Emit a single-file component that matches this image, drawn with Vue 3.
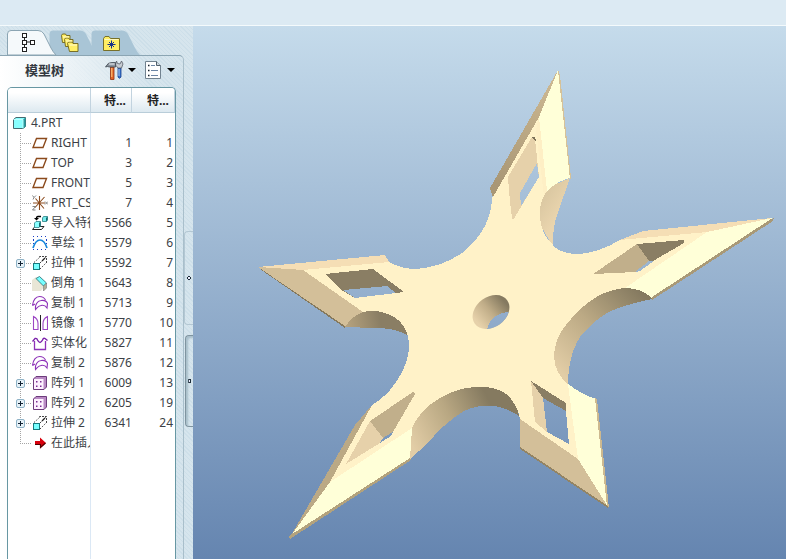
<script setup>
import { ref } from 'vue'

const activeTab = ref('tree')
const tabs = [
  { id: 'tree', label: '模型树' },
  { id: 'folders', label: '文件夹浏览器' },
  { id: 'favorites', label: '收藏夹' },
]

const rows = [
  { name: 'RIGHT', icon: 'plane', no: 1, id: 1 },
  { name: 'TOP', icon: 'plane', no: 3, id: 2 },
  { name: 'FRONT', icon: 'plane', no: 5, id: 3 },
  { name: 'PRT_CS', icon: 'csys', no: 7, id: 4 },
  { name: '导入特征', icon: 'import', no: 5566, id: 5 },
  { name: '草绘 1', icon: 'sketch', no: 5579, id: 6 },
  { name: '拉伸 1', icon: 'extrude', no: 5592, id: 7, open: false },
  { name: '倒角 1', icon: 'chamfer', no: 5643, id: 8 },
  { name: '复制 1', icon: 'copy', no: 5713, id: 9 },
  { name: '镜像 1', icon: 'mirror', no: 5770, id: 10 },
  { name: '实体化', icon: 'solid', no: 5827, id: 11 },
  { name: '复制 2', icon: 'copy', no: 5876, id: 12 },
  { name: '阵列 1', icon: 'pattern', no: 6009, id: 13, open: false },
  { name: '阵列 2', icon: 'pattern', no: 6205, id: 19, open: false },
  { name: '拉伸 2', icon: 'extrude', no: 6341, id: 24, open: false },
  { name: '在此插入', icon: 'insert', last: true },
]
</script>

<template>
  <div class="app">
    <svg class="defs" aria-hidden="true">
      <symbol id="i-part" viewBox="0 0 16 16">
        <path d="M1.5 4.5 4 2.500H13.500V11.500L11 13.500H1.500Z" fill="#8ff" stroke="#446a70" />
        <path d="M11 4.500 13.500 2.500V11.500L11 13.500Z" fill="#269a9e" />
        <path d="M1.500 4.500H11V13.500" fill="none" stroke="#bff" />
      </symbol>
      <symbol id="i-plane" viewBox="0 0 16 16">
        <path d="M4.500 3.500H14.500L11 12.500H1Z" fill="none" stroke="#8b4a1c" stroke-width="1.400" />
      </symbol>
      <symbol id="i-csys" viewBox="0 0 16 16">
        <path d="M7.500 1V15M1 8H13M3.500 3.500 12 13.500M12.500 2 3 12.500" stroke="#8b4a1c" stroke-width="1.100" fill="none" />
        <path d="M.5 .5 2 2.500 4 .5M2 2.500 1 4.500M13 6.500 16 9.500M16 6.500 13 9.500M.5 11.500H3.500L.5 15H3.500" stroke="#777" stroke-width=".9" fill="none" />
      </symbol>
      <symbol id="i-import" viewBox="0 0 16 16">
        <path d="M.5 14.500 3 11.500H12L9.500 14.500Z" fill="#fff" stroke="#222" />
        <path d="M2.500 8 4 6.500H8.500V11L7 12.500H2.500Z" fill="#8ff" stroke="#2a7f84" stroke-width=".8" />
        <path d="M7 12.500V8L8.500 6.500V11Z" fill="#146b70" />
        <path d="M10.500 3 11.500 1.500H15.500V5L14.500 6.500H10.500Z" fill="#7ee" stroke="#2a7f84" stroke-width=".8" />
        <path d="M14 6.500V3L15.500 1.500V5Z" fill="#146b70" />
        <path d="M9 1.500H6Q4.500 1.500 4.500 3.500" stroke="#000" stroke-width="1.300" fill="none" />
        <path d="M2 3H7L4.500 5.500Z" fill="#000" />
      </symbol>
      <symbol id="i-sketch" viewBox="0 0 16 16">
        <path d="M1 1.500H15M1 14.500H15M1.500 5V6M1.500 8V9M14.500 5V6M14.500 8V9" stroke="#1c3fc4" stroke-dasharray="1 3" fill="none" />
        <path d="M1.500 4V13M14.500 4V13" stroke="#1c3fc4" stroke-dasharray="1 3" fill="none" />
        <path d="M1 13C3 7 5 5 8 5S13 7 15 13" stroke="#1686dc" stroke-width="1.700" fill="none" />
      </symbol>
      <symbol id="i-extrude" viewBox="0 0 16 16">
        <path d="M2 7.500 7.500 2.500M8 14 14 8" stroke="#444" stroke-dasharray="1.500 1.500" fill="none" />
        <path d="M7.500 2V1.500H14.500V8M8 8 14 2" stroke="#444" stroke-dasharray="2 1" fill="none" />
        <path d="M10 6 13 3" stroke="#222" stroke-width="1.200" />
        <rect x="1.500" y="8.500" width="6" height="6" fill="#7ff" stroke="#16797e" />
      </symbol>
      <symbol id="i-chamfer" viewBox="0 0 16 16">
        <path d="M0 5 4 2 12 12 9 16H0Z" fill="#e8e6d6" />
        <path d="M4 3.500 7.500 1.500 14.500 8 11.500 11Z" fill="#7ff" stroke="#256a70" stroke-width=".8" />
        <path d="M11.500 11 14.500 8V13L11.500 16Z" fill="#b5b09a" stroke="#777" stroke-width=".6" />
      </symbol>
      <symbol id="i-copy" viewBox="0 0 16 16">
        <path d="M.5 10.500C1 5 4 1.500 7.500 1.500 11 1.500 12.500 3 13.500 5M.5 10.500 3 9" fill="none" stroke="#8d31b8" stroke-width="1.100" />
        <path d="M3.500 14.500C3 10 5 6 9 5.500 12 5 14.500 6 15.500 8.500L15 13C13 10 11 10 9 10.500 6 11 5 13 3.500 14.500Z" fill="#fff" stroke="#8d31b8" stroke-width="1.100" />
      </symbol>
      <symbol id="i-mirror" viewBox="0 0 16 16">
        <path d="M8.500 0V16" stroke="#222" />
        <path d="M1.500 1.500C4.500 3 6 6 6 8.500V14.500H1.500ZM15.500 1.500C12.500 3 11 6 11 8.500V14.500H15.500Z" fill="#fff" stroke="#9c45c4" stroke-width="1.100" />
      </symbol>
      <symbol id="i-solid" viewBox="0 0 16 16">
        <path d="M2.500 6V14.500H13.500V6" fill="#fff" stroke="#8d31b8" stroke-width="1.300" />
        <path d="M.5 6.500 3 3.500Q5 3 5.500 5 8 10 10.500 5 11.500 2.500 13 3.500L15.500 5.500" fill="none" stroke="#7a1faa" stroke-width="1.400" />
      </symbol>
      <symbol id="i-pattern" viewBox="0 0 16 16">
        <path d="M1.500 4 4 1.500H14.500V12L12 14.500H1.500Z" fill="#b98ac4" stroke="#6d3b7c" />
        <path d="M2 4H11.500V14H2Z" fill="#fdf0ff" />
        <path d="M4 6H5.500V7.500H4ZM8 6H9.500V7.500H8ZM4 10.500H5.500V12H4ZM8 10.500H9.500V12H8Z" fill="#7b2d92" />
      </symbol>
      <symbol id="i-insert" viewBox="0 0 16 16">
        <path d="M3 6H8V2.500L14 8 8 13.500V10H3Z" fill="#d8000c" />
        <path d="M3 9.500H8.500V12.500L13.500 8" fill="none" stroke="#520000" stroke-width="1.200" />
      </symbol>
      <symbol id="i-tree" viewBox="0 0 20 20">
        <path d="M6.500 5V15M6.500 10H13" stroke="#222" fill="none" />
        <g fill="#fff" stroke="#222"><rect x="4.500" y="1.500" width="4" height="4" /><rect x="4.500" y="8.500" width="4" height="4" /><rect x="12.500" y="8.500" width="4" height="4" /><rect x="4.500" y="15.500" width="4" height="4" /></g>
      </symbol>
      <symbol id="i-folders" viewBox="0 0 20 20">
        <g fill="#ffef66" stroke="#6d6318" stroke-width=".9">
          <path d="M1.500 3.500 2.500 2H5.500L6.500 3.500H10V10.500H2.500Z" />
          <path d="M4.500 7.500 5.500 6H8.500L9.500 7.500H13V14.500H5.500Z" />
          <path d="M7.500 11.500 8.500 10H12L13 11.500H18V19.500H9.500Z" />
        </g>
        <path d="M3 5H9M6 9H12M9.500 13H17" stroke="#fffbd0" />
      </symbol>
      <symbol id="i-favorites" viewBox="0 0 20 20">
        <path d="M1.500 18.500V6.500L3 4.500H7L8.500 6.500H17.500V18.500Z" fill="#ffee62" stroke="#77702a" />
        <path d="M2.500 7.500H16.500" stroke="#fff9c0" />
        <path d="M9.500 8.500V16.500M5.500 12.500H13.500M7 10 12 15M12 10 7 15" stroke="#16308a" />
      </symbol>
      <symbol id="i-tools" viewBox="0 0 20 20">
        <path d="M13 8V17Q14.500 19.500 16 17V8Z" fill="#3973cd" stroke="#173f8c" stroke-width=".8" />
        <path d="M14 9V16" stroke="#a9c9f5" />
        <path d="M11.500 1 12.500 3.500 15 4 16.500 1 18 4 16.500 8H13L10.500 5Z" fill="#c6ccd2" stroke="#555c66" stroke-width=".8" />
        <path d="M5.500 7H9V19.500H5.500Z" fill="#e46528" stroke="#90300d" stroke-width=".8" />
        <path d="M6.800 8V17" stroke="#ffcc80" />
        <path d="M.5 7Q3 2 7 2.500H10.500V7H4.500Q2.500 6 .5 7Z" fill="#8b949e" stroke="#3f4751" stroke-width=".8" />
        <path d="M4 4H9.500" stroke="#eef2f5" />
      </symbol>
      <symbol id="i-list" viewBox="0 0 20 20">
        <path d="M1.500 1.500H12.500L16.500 5.500V18.500H1.500Z" fill="#fff" stroke="#71828f" />
        <path d="M12.500 1.500V5.500H16.500" fill="#cdd8df" stroke="#50606c" />
        <path d="M7 5.500H11M7 10.500H14M7 15.500H14" stroke="#6c86a5" />
        <path d="M4 5.500H5.500M4 10.500H5.500M4 15.500H5.500" stroke="#16222e" stroke-width="1.500" />
      </symbol>
    </svg>

    <header class="topbar"></header>

    <div class="body">
      <aside class="sidebar">
        <div class="left">
          <nav class="tabs">
            <button
              v-for="t in tabs"
              :key="t.id"
              type="button"
              class="tab"
              :class="{ active: activeTab === t.id }"
              :aria-label="t.label"
              @click="activeTab = t.id"
            >
              <svg class="tab-shape" viewBox="0 0 50 25" aria-hidden="true">
                <path d="M.5 25V4Q.5 .5 4 .5H31Q35 .5 37 4L44 18Q46 22 49 25Z" />
              </svg>
              <svg class="tab-icon" aria-hidden="true"><use :href="'#i-' + t.id" /></svg>
            </button>
          </nav>

          <section class="panel">
            <div class="toolbar">
              <h1>模型树</h1>
              <button type="button" class="tool" aria-label="设置">
                <svg aria-hidden="true"><use href="#i-tools" /></svg><i class="caret"></i>
              </button>
              <button type="button" class="tool" aria-label="显示">
                <svg aria-hidden="true"><use href="#i-list" /></svg><i class="caret"></i>
              </button>
            </div>

            <div class="grid">
              <table>
                <colgroup><col class="c-name" /><col class="c-no" /><col /></colgroup>
                <thead>
                  <tr><th></th><th>特...</th><th>特...</th></tr>
                </thead>
                <tbody>
                  <tr>
                    <td>
                      <div class="node root">
                        <svg class="ico" aria-hidden="true"><use href="#i-part" /></svg><span>4.PRT</span>
                      </div>
                    </td>
                    <td></td>
                    <td></td>
                  </tr>
                  <tr v-for="r in rows" :key="r.name">
                    <td>
                      <div class="node">
                        <span class="branch" :class="{ last: r.last }">
                          <button v-if="r.open === false" type="button" class="expand" :aria-label="'展开 ' + r.name"></button>
                        </span>
                        <svg class="ico" aria-hidden="true"><use :href="'#i-' + r.icon" /></svg>
                        <span>{{ r.name }}</span>
                      </div>
                    </td>
                    <td>{{ r.no }}</td>
                    <td>{{ r.id }}</td>
                  </tr>
                </tbody>
              </table>
            </div>
          </section>
        </div>

        <div class="rail">
          <button type="button" class="handle" aria-label="折叠导航器"></button>
          <button type="button" class="handle raised" aria-label="展开浏览器"></button>
        </div>
      </aside>

      <main class="viewport">
        <svg class="model" viewBox="193 26 593 533" shape-rendering="crispEdges" role="img" aria-label="4.PRT">
          <defs>
            <linearGradient id="wallRight" gradientUnits="userSpaceOnUse" x1="560" y1="372" x2="640" y2="292">
              <stop offset="0" stop-color="#e2cda6" /><stop offset=".5" stop-color="#bba984" /><stop offset="1" stop-color="#857a60" />
            </linearGradient>
            <linearGradient id="wallBottom" gradientUnits="userSpaceOnUse" x1="412" y1="445" x2="505" y2="398">
              <stop offset="0" stop-color="#e2cda6" /><stop offset=".45" stop-color="#b8a782" /><stop offset=".85" stop-color="#857a60" />
            </linearGradient>
            <linearGradient id="wallLeft" gradientUnits="userSpaceOnUse" x1="347" y1="327" x2="380" y2="320">
              <stop offset="0" stop-color="#b5a27e" /><stop offset="1" stop-color="#8a7e64" />
            </linearGradient>
            <linearGradient id="wallTop" gradientUnits="userSpaceOnUse" x1="544" y1="200" x2="562" y2="212">
              <stop offset="0" stop-color="#dcc9a3" /><stop offset="1" stop-color="#ead5ae" />
            </linearGradient>
            <linearGradient id="bore" gradientUnits="userSpaceOnUse" x1="477" y1="322" x2="503" y2="300">
              <stop offset="0" stop-color="#e6d1aa" /><stop offset=".5" stop-color="#c0ad88" /><stop offset="1" stop-color="#857a60" />
            </linearGradient>
            <linearGradient id="edge" gradientUnits="userSpaceOnUse" x1="500" y1="185" x2="552" y2="85">
              <stop offset="0" stop-color="#a99775" /><stop offset="1" stop-color="#cbb791" />
            </linearGradient>
            <linearGradient id="sky" gradientUnits="userSpaceOnUse" x1="0" y1="26" x2="0" y2="559">
              <stop offset="0" stop-color="#c5dbeb" /><stop offset="1" stop-color="#6585b0" />
            </linearGradient>
            <clipPath id="boreClip"><ellipse cx="491" cy="312" rx="20" ry="15" transform="rotate(-36 491 312)" /></clipPath>
          </defs>

          <!-- side walls of the concave arcs -->
          <path fill="url(#wallTop)" d="M570 178 547 188Q536 210 541 226L553 247Q552 229 558 212Z" />
          <path fill="url(#wallRight)" d="M652 299Q620 306 607 313 592 322 580 337 568 356 568 385L550 376 546 346 570 306 610 284 640 284Z" />
          <path fill="url(#wallBottom)" d="M410 459 427 444Q443 424 464 411 492 398 519 416L512 384 470 380 430 392 406 425Z" />
          <path fill="url(#wallLeft)" d="M345 327 352 312 380 304 412 322 407 335Q396 328 375 328Z" />

          <!-- front face -->
          <path fill="#fff2c8" d="M539 117 547 191Q538 204 540 218 542 236 553 245 560 254 580 254 600 252 620 240L707 232 625 288Q596 290 571 319 554 337 554 357 555 374 568 384L572 410 578 459 520 419Q518 408 513 402 504 386 477 387 452 388 431 404 419 413 412 428L330 482 372 405Q391 394 402 372 409 358 409 345 408 322 388 314 376 309 363 312L303 270 389 262Q401 269 417 269 447 266 467 249 488 229 491 207L493 194Z" />

          <!-- bevels -->
          <path fill="url(#edge)" d="M558 70 539 117 493 197 490 188Z" />
          <path fill="#ffffd8" d="M558 70 570 178Q557 181 547 191L539 117Z" />
          <path fill="#feefc5" d="M539 117 547 191 544 196 536 130Z" />
          <path fill="#d6c298" d="M558 70 560 75 571 178 570 179Z" />
          <path fill="#f5deb5" d="M620 240 643 231 772 218 707 232Z" />
          <path fill="#ffffd8" d="M772 218 707 232 625 288Q641 288 652 298L773 220Z" />
          <path fill="#a99977" d="M774 218 773 221 652 300 652 297 771 219Z" />
          <path fill="#ffffd8" d="M568 384Q581 394 596 399L608 507 578 459 572 415Z" />
          <path fill="#cdb98f" d="M595 398 597 399 609 508 607 506Z" />
          <path fill="#d3bf99" d="M520 419 578 459 608 507 520 448Z" />
          <path fill="#938464" d="M520 447 608 506V508L520 449Z" />
          <path fill="#bba985" d="M290 537 355 425 372 405 330 482Z" />
          <path fill="#ffffd8" d="M290 537 330 482 412 428 410 459Z" />
          <path fill="#b3a27c" d="M289 536 410 458 411 460 290 539Z" />
          <path fill="#f5deb5" d="M258 267 385 255 389 262 303 270Z" />
          <path fill="#d3bf99" d="M258 267 303 270 363 312Q352 316 345 327Z" />
          <path fill="#85795d" d="M258 267 345 326V328L260 269Z" />

          <!-- windows in the blades -->
          <path fill="#e6d1aa" d="M532 137 535 139 539 177 513 220Q511 219 508 177Z" />
          <path fill="#7d7259" d="M532 137H535L536 141 533 139Z" />
          <path fill="url(#sky)" d="M537 163 539 177 521 206 520 193Z" />
          <path fill="#c1af8b" d="M593 274 637 244 649 261 635 272Z" />
          <path fill="#8a7e64" d="M637 244 684 240V243L653 261H649Z" />
          <path fill="url(#sky)" d="M649 261H654L640 271 635 272Z" />
          <path fill="#8a7e64" d="M325 274 373 269 404 292 355 298 343 291Z" />
          <path fill="url(#sky)" d="M343 290 387 286 396 293 355 298Z" />
          <path fill="#e6d1aa" d="M346 464 370 421 383 438 380 443Z" />
          <path fill="#c1af8b" d="M370 421 413 392 415 394 393 432 383 438Z" />
          <path fill="url(#sky)" d="M380 443 383 438 393 432 391 436Z" />
          <path fill="#e6d1aa" d="M531 381 543 398 547 432 535 422Z" />
          <path fill="#8a7e64" d="M531 381 566 403V411L543 398Z" />
          <path fill="url(#sky)" d="M543 398 566 411 569 444 547 432Z" />

          <!-- centre bore -->
          <g clip-path="url(#boreClip)">
            <rect x="468" y="290" width="46" height="44" fill="url(#bore)" />
            <path fill="url(#sky)" d="M487 330Q490 313 510 312V334Z" />
          </g>
        </svg>
      </main>
    </div>
  </div>
</template>

<style>
body {
  margin: 0;
}
</style>

<style scoped>
.app {
  display: flex;
  flex-direction: column;
  height: 100vh;
  overflow: hidden;
  font: 12px/20px "Noto Sans", "Noto Sans CJK SC", sans-serif;
  color: #3c3f46;
}
.defs {
  position: absolute;
  width: 0;
  height: 0;
}
button {
  padding: 0;
  border: 0;
  background: none;
  font: inherit;
}
.topbar {
  flex: none;
  height: 25px;
  background: #dceaf3;
  border-bottom: 1px solid #f4fafc;
}
.body {
  flex: 1;
  display: flex;
  min-height: 0;
}
.sidebar {
  flex: none;
  display: flex;
  background: repeating-linear-gradient(45deg, #cddfe9 0 1px, #d6e5ed 1px 3px);
}
.left {
  display: flex;
  flex-direction: column;
  width: 184px;
}
.tabs {
  display: flex;
  padding: 4px 0 0 7px;
}
.tab {
  display: grid;
  justify-items: start;
  width: 42px;
  height: 25px;
}
.tab > svg {
  grid-area: 1 / 1;
}
.tab-shape {
  width: 50px;
  height: 25px;
}
.tab-shape path {
  fill: #a9c5d6;
}
.tab.active {
  z-index: 1;
}
.tab.active .tab-shape path {
  fill: #f5f9fb;
  stroke: #8ba5b3;
}
.tab-icon {
  width: 20px;
  height: 20px;
  margin: 2px 0 0 11px;
}
.panel {
  flex: 1;
  display: flex;
  flex-direction: column;
  min-height: 0;
  padding-right: 7px;
  border-top: 1px solid #8ba5b3;
  border-right: 1px solid #a9bfcb;
  border-top-right-radius: 5px;
  background: linear-gradient(90deg, #fff 0, #f4f8fa 40px, #d3e2ea00 150px);
}
.toolbar {
  display: flex;
  align-items: center;
  gap: 8px;
  height: 28px;
  padding: 0 1px 3px 25px;
}
h1 {
  flex: 1;
  margin: 0;
  font-size: 13px;
  line-height: 20px;
  color: #333840;
}
.tool {
  display: flex;
  align-items: center;
  gap: 3px;
}
.tool svg {
  width: 20px;
  height: 20px;
}
.caret {
  border: 4px solid transparent;
  border-top-color: #000;
  border-bottom: 0;
}
.grid {
  flex: 1;
  min-height: 0;
  margin-left: 7px;
  overflow: hidden;
  border: 1px solid #6797a3;
  border-bottom: 0;
  border-radius: 5px 5px 0 0;
  background: linear-gradient(90deg, #fff 82px, #dbe8f5 82px 83px, #fff 83px);
}
table {
  width: 100%;
  table-layout: fixed;
  border-collapse: separate;
  border-spacing: 0;
}
.c-name {
  width: 83px;
}
.c-no {
  width: 41px;
}
th {
  box-sizing: border-box;
  height: 25px;
  padding: 2px 5px 0 0;
  text-align: right;
  color: #222;
  border-right: 1px solid #c2d3df;
  border-bottom: 1px solid #b9cdd9;
  background: linear-gradient(#fff 20%, #dde9f0);
}
td {
  height: 20px;
  padding: 0;
  text-align: right;
  white-space: nowrap;
}
td:last-child {
  padding-right: 2px;
}
.node {
  display: flex;
  align-items: center;
  height: 20px;
  margin-right: 1px;
  overflow: hidden;
}
.node > span:last-child {
  margin-left: 3px;
}
.ico {
  flex: none;
  width: 16px;
  height: 16px;
}
.root {
  padding-left: 4px;
}
.branch {
  flex: none;
  align-self: stretch;
  display: grid;
  place-items: center start;
  width: 24px;
  background:
    repeating-linear-gradient(#a5a5a5 0 1px, transparent 1px 2px) 12px 0 / 1px 100% no-repeat,
    repeating-linear-gradient(90deg, #a5a5a5 0 1px, transparent 1px 2px) 12px 10px / 12px 1px no-repeat;
}
.branch.last {
  background-size: 1px 10px, 12px 1px;
}
.expand {
  box-sizing: border-box;
  width: 9px;
  height: 9px;
  margin-left: 8px;
  border: 1px solid #8fb3c7;
  border-radius: 2px;
  background:
    linear-gradient(#123, #123) center / 5px 1px no-repeat,
    linear-gradient(#123, #123) center / 1px 5px no-repeat,
    #e6f1f7;
}
.rail {
  display: flex;
  flex-direction: column;
  gap: 10px;
  width: 9px;
  padding-top: 205px;
}
.handle {
  height: 94px;
  border: 1px solid #b3c7d3;
  border-right: 0;
  border-radius: 4px 0 0 4px;
  background: radial-gradient(circle, #eef 0 1px, #1d2c38 1px 2px, transparent 2px);
}
.raised {
  height: 92px;
  margin-left: 1px;
  border-color: #7f949f;
  box-shadow: inset 2px 2px 2px #a9bfcb;
}
.viewport {
  flex: 1;
  min-width: 0;
  background: linear-gradient(#c5dbeb, #6585b0);
}
.model {
  display: block;
  width: 100%;
  height: 100%;
}
</style>
